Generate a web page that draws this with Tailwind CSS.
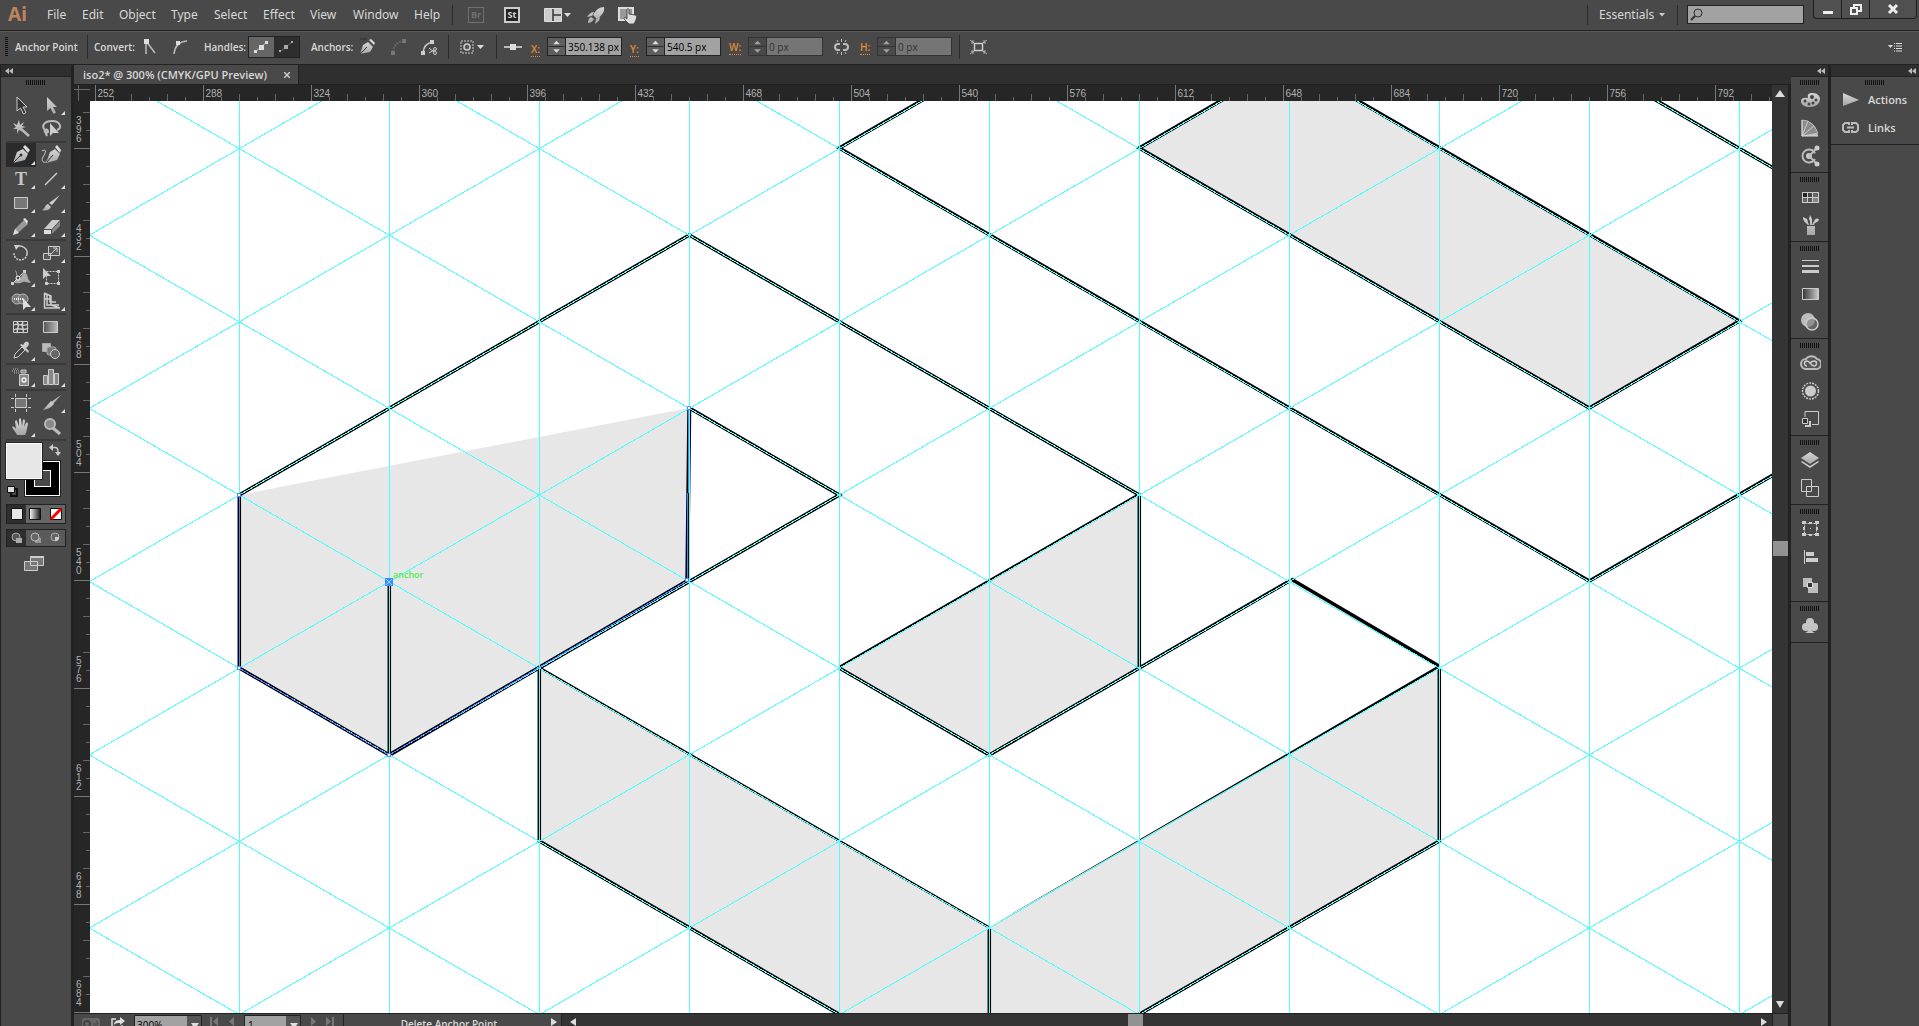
<!DOCTYPE html>
<html lang="en">
<head>
    <meta charset="UTF-8">
    <title>iso2* @ 300% (CMYK/GPU Preview)</title>
    <script src="https://cdn.jsdelivr.net/npm/@tailwindcss/browser@4"></script>
</head>
<body class="h-screen overflow-hidden flex flex-col bg-[#494949] text-[#d8d8d8] font-['Open_Sans','Noto_Sans',sans-serif] text-[11px] leading-4">
    <!-- shared pieces -->
    <svg class="absolute size-0">
        <defs>
            <pattern id="dots" width="2" height="5" patternUnits="userSpaceOnUse"><rect width="1" height="5" fill="#111"/></pattern>
            <linearGradient id="metal" x2="0" y2="1"><stop stop-color="#d6d6d6"/><stop offset="1" stop-color="#a6a6a6"/></linearGradient>
            <linearGradient id="ramp"><stop stop-color="#333"/><stop offset="1" stop-color="#ccc"/></linearGradient>
            <linearGradient id="rampTool"><stop stop-color="#555"/><stop offset="1" stop-color="#bbb"/></linearGradient>
            <linearGradient id="rampLight"><stop stop-color="#fff"/><stop offset="1" stop-color="#111"/></linearGradient>
        </defs>
        <symbol id="grip" viewBox="0 0 20 5"><rect width="20" height="5" fill="url(#dots)"/></symbol>
        <symbol id="collapse" viewBox="0 0 8 6"><path d="M4 0v6L0 3zM8 0v6L4 3z" fill="#bbb"/></symbol>
        <symbol id="corner" viewBox="0 0 30 24"><path d="M29 18v4h-4z" fill="#e0e0e0"/></symbol>
        <symbol id="steps" viewBox="0 0 17 18"><path d="M0 9h17" stroke="#2a2a2a"/><path d="M5 6.500h7L8.500 3zM5 12h7l-3.500 3.500z" fill="#ddd"/></symbol>
    </svg>

    <!-- menu bar -->
    <header class="h-[31px] shrink-0 flex items-center border-b border-[#222] text-xs">
        <div class="w-[47px] pl-2 pb-[2px] text-[19px] leading-6 font-bold text-[#c0845c] font-['Noto_Sans',sans-serif]">Ai</div>
        <nav class="grid grid-cols-[35px_37px_52px_43px_49px_47px_43px_61px_38px] font-['Noto_Sans',sans-serif]">
            <a href="#">File</a><a href="#">Edit</a><a href="#">Object</a><a href="#">Type</a><a href="#">Select</a><a href="#">Effect</a><a href="#">View</a><a href="#">Window</a><a href="#">Help</a>
        </nav>
        <div class="w-4 h-5 border-l border-[#2c2c2c]"></div>
        <button class="w-4 h-4 mb-px border border-[#707070] text-[#707070] text-[9px] leading-3 font-bold">Br</button>
        <button class="w-4 h-4 mb-px ml-5 border-2 border-[#ccc] bg-[#222] text-[9px] leading-3 font-bold">St</button>
        <button class="ml-6 mb-px" aria-label="Arrange documents"><svg width="27" height="16"><path d="M.5 1.500h17v13H.5z" fill="#ccc" stroke="#ddd"/><path d="M9 2v12M9 8h8" stroke="#333" stroke-width="1.500"/><path d="M20 6h7l-3.500 4z" fill="#ddd"/></svg></button>
        <button class="ml-4" aria-label="GPU performance"><svg width="18" height="18" fill="url(#metal)"><path d="M17 1C12 1 9 4 6 9l4 4c5-4 8-7 7-12zM7 6C4 6 2 8 0 11l5-1zM13 11c0 3-2 5-5 7l1-5zM4 11c-2 1-3 3-3 6 3 0 5-2 6-4z"/></svg></button>
        <button class="ml-[13px]" aria-label="Touch workspace"><svg width="20" height="18"><path d="M1 2h14v12H1z" fill="#999" stroke="#ddd" stroke-width="2"/><path d="M9 11V4c0-2 2-2 2 0v4l6 1c2 0 2 2 1 5l-2 4h-5l-5-5c0-2 1-2 3 0z" fill="#ddd" stroke="#333" stroke-width=".8"/></svg></button>
        <div class="flex-1"></div>
        <div class="h-5 w-3 border-l border-[#2c2c2c]"></div>
        <select class="appearance-none w-14 pb-px font-['Noto_Sans',sans-serif]" aria-label="Workspace"><option>Essentials</option></select>
        <svg class="ml-1 mr-3" width="6" height="4"><path d="M0 0h6L3 3.500z" fill="#ccc"/></svg>
        <div class="h-5 w-[10px] border-l border-[#2c2c2c]"></div>
        <label class="w-[117px] h-[19px] mb-[2px] flex items-center bg-[#a2a2a2] border border-[#222]">
            <svg class="ml-[2px]" width="13" height="13" fill="none" stroke="#333"><circle cx="8" cy="5" r="4"/><path d="M5 8l-4 4" stroke-width="2"/></svg>
            <input type="text" aria-label="Search" class="w-20 outline-none">
        </label>
        <div class="self-start ml-[9px] mr-[2px] h-[19px] flex border border-t-0 border-[#1f1f1f] rounded-b text-white divide-x divide-[#1f1f1f] bg-[#505050]">
            <button class="w-7" aria-label="Minimize"><svg width="27" height="18"><path d="M9 11h10v3H9z" fill="#eee"/></svg></button>
            <button class="w-7" aria-label="Restore"><svg width="27" height="18" fill="none" stroke="#eee" stroke-width="2"><path d="M12 9V5h7v6h-4M9 8h6v6H9z"/></svg></button>
            <button class="w-[46px]" aria-label="Close"><svg width="45" height="18" stroke="#eee" stroke-width="3"><path d="M19 5l8 8M27 5l-8 8"/></svg></button>
        </div>
    </header>

    <!-- control bar -->
    <section class="h-[34px] pb-[3px] shrink-0 flex items-center border-t border-t-[#5a5a5a] border-b border-b-[#222] text-[10px] font-semibold whitespace-nowrap">
        <svg class="ml-[5px] mr-[7px] shrink-0" width="3" height="20"><path d="M1.500 0v20" stroke="#111" stroke-width="3" stroke-dasharray="1 1"/></svg>
        <h1 class="w-[72px] shrink-0">Anchor Point</h1>
        <div class="w-[7px] h-6 border-l border-[#2c2c2c]"></div>
        <span class="w-[49px]">Convert:</span>
        <button class="w-[30px]" aria-label="Convert to corner"><svg width="16" height="18"><path d="M3 16V3l9 12" fill="none" stroke="#bbb" stroke-width="1.500"/><path d="M1 1h5v5H1z" fill="#ddd"/></svg></button>
        <button class="w-[31px]" aria-label="Convert to smooth"><svg width="16" height="18"><path d="M1 16Q2 4 14 3" fill="none" stroke="#bbb" stroke-width="1.500"/><path d="M3 3h4v4H3z" fill="#ddd"/></svg></button>
        <span class="w-[44px]">Handles:</span>
        <div class="flex border border-[#222] mr-[11px]">
            <button class="bg-[#666]" aria-label="Show handles"><svg width="25" height="20" fill="#ddd"><path d="M7 14L18 5" stroke="#bbb"/><path d="M5 13h3v3H5zM10 8h5v5h-5zM16 4h3v3h-3z"/></svg></button>
            <button class="bg-[#2e2e2e]" aria-label="Hide handles"><svg width="25" height="20" fill="#aaa"><path d="M7 14L18 5" stroke="#666"/><path d="M5 13h2v2H5zM10 8h4v4h-4zM17 4h2v2h-2z"/></svg></button>
        </div>
        <span class="w-12">Anchors:</span>
        <button class="w-[32px]" aria-label="Remove anchor"><svg width="18" height="18"><path d="M1 16L4 7l5-3 5 5-3 5z" fill="url(#metal)"/><path d="M10 2l5 5 1-2-4-4z" fill="#ddd"/><path d="M1 16l7-7M1 1h7" stroke="#333"/></svg></button>
        <button class="w-[30px]" aria-label="Connect anchors"><svg width="16" height="18"><path d="M2 14Q3 4 13 3" fill="none" stroke="#666" stroke-width="2" stroke-dasharray="2 1"/><path d="M0 13h4v4H0zM11 1h4v4h-4z" fill="#777"/></svg></button>
        <button class="w-[27px]" aria-label="Cut path"><svg width="18" height="18" fill="none" stroke="#ccc"><path d="M2 15Q3 5 12 4" stroke-width="1.500"/><path d="M0 13h4v4H0zM9 2h4v4H9z" fill="#ccc" stroke="none"/><circle cx="14" cy="11" r="1.500"/><circle cx="14" cy="15" r="1.500"/><path d="M8 10l5 4M8 15l5-3"/></svg></button>
        <div class="w-3 h-6 border-l border-[#2c2c2c]"></div>
        <button class="w-9" aria-label="Isolate"><svg width="25" height="16"><path d="M1 2h12v12H1z" fill="none" stroke="#ccc" stroke-dasharray="2 1"/><circle cx="7" cy="8" r="3" fill="#555" stroke="#ccc" stroke-width="1.500"/><path d="M17 6h7l-3.500 4z" fill="#ddd"/></svg></button>
        <div class="w-2 h-6 border-l border-[#2c2c2c]"></div>
        <svg class="w-[19px] h-4 mr-2 shrink-0"><path d="M0 8h18" stroke="#bbb" stroke-width="2"/><path d="M6 5h6v6H6z" fill="#ddd"/></svg>
        <label for="x" class="w-4 shrink-0 mt-1 text-[#e38a35]"><span class="border-b border-dotted">X:</span></label>
        <div class="mr-2 h-[19px] flex border border-[#222]"><svg class="bg-[#5e5e5e]" width="17" height="17"><use href="#steps"/></svg><input id="x" value="350.138 px" class="w-14 pl-[2px] bg-[#a2a2a2] text-black font-normal border-l border-[#222]"></div>
        <label for="y" class="w-4 shrink-0 mt-1 text-[#e38a35]"><span class="border-b border-dotted">Y:</span></label>
        <div class="mr-2 h-[19px] flex border border-[#222]"><svg class="bg-[#5e5e5e]" width="17" height="17"><use href="#steps"/></svg><input id="y" value="540.5 px" class="w-14 pl-[2px] bg-[#a2a2a2] text-black font-normal border-l border-[#222]"></div>
        <label for="w" class="w-[19px] shrink-0 text-[#e38a35]"><span class="border-b border-dotted">W:</span></label>
        <div class="mr-[11px] h-[19px] flex border border-[#333]"><svg class="opacity-60" width="17" height="17"><use href="#steps"/></svg><input id="w" value="0 px" class="w-14 pl-[2px] bg-[#757575] text-[#333] font-normal border-l border-[#333]"></div>
        <svg class="w-[26px] h-4 shrink-0" fill="none" stroke="#bbb" stroke-width="2"><path d="M6 5H4a3 3 0 0 0 0 6h2M9 5h2a3 3 0 0 1 0 6H9"/><path d="M7.500 0v3M7.500 13v3M3 1l1 2M12 1l-1 2M3 15l1-2M12 15l-1-2" stroke-width="1"/></svg>
        <label for="h" class="w-[17px] shrink-0 text-[#e38a35]"><span class="border-b border-dotted">H:</span></label>
        <div class="mr-[7px] h-[19px] flex border border-[#333]"><svg class="opacity-60" width="17" height="17"><use href="#steps"/></svg><input id="h" value="0 px" class="w-14 pl-[2px] bg-[#757575] text-[#333] font-normal border-l border-[#333]"></div>
        <div class="w-[11px] h-6 border-l border-[#2c2c2c]"></div>
        <button aria-label="Transform"><svg width="17" height="16" fill="none" stroke="#ccc"><path d="M4.500 4.500h8v7h-8z" stroke-width="1.500"/><path d="M0 1l4 3M17 1l-4 3M0 15l4-3M17 15l-4-3M1 4h2V1M16 4h-2V1M1 12h2v3M16 12h-2v3" stroke-width=".8"/></svg></button>
        <button class="ml-auto mr-4" aria-label="Panel menu"><svg width="15" height="10" fill="none" stroke="#ddd"><path d="M0 3h5L2.500 6z" fill="#ddd" stroke="none"/><path d="M6 1.500h1M8 1.500h6M6 4h1M8 4h6M6 6.500h1M8 6.500h6M6 9h1M8 9h6"/></svg></button>
    </section>

    <main class="flex-1 min-h-0 flex">
        <!-- tools -->
        <aside class="w-[74px] shrink-0 border-l border-r-3 border-[#222]">
            <div class="h-3 bg-[#2f2f2f] border-b border-[#222] pl-1 pt-[3px]"><svg width="8" height="6"><use href="#collapse"/></svg></div>
            <svg class="mt-[3px] ml-[25px] mb-2" width="20" height="5"><use href="#grip"/></svg>
            <div class="ml-[5px] w-15 flex flex-col [&_button]:block">
                <div class="grid grid-cols-2 border-b-2 border-[#3a3a3a]">
                    <button aria-label="Selection"><svg width="30" height="24"><path d="M11 4v14l3.500-3 3 6 2.500-1.500-3-5.500h4z" fill="#333" stroke="#ccc"/></svg></button>
                    <button aria-label="Direct selection"><svg width="30" height="24"><path d="M11 4v14l3.500-3 3 6 2.500-1.500-3-5.500h4z" fill="url(#metal)"/><use href="#corner"/></svg></button>
                    <button aria-label="Magic wand"><svg width="30" height="24"><path d="M14 11l9 8" stroke="#bbb" stroke-width="2.500"/><path d="M13 3l1 5 4-3-2 4 4 1-4 1 1 4-4-2-2 4v-5l-4 0 3-2-3-4 4 2z" fill="url(#metal)"/></svg></button>
                    <button aria-label="Lasso"><svg width="30" height="24"><path d="M9 13c-4-4-1-9 7-9s11 7 5 9M9 13c-2 3 4 4 3 1s-4-1-1 5" fill="none" stroke="#bbb" stroke-width="2"/><path d="M14 6v13l3-3h6z" fill="#ccc"/></svg></button>
                </div>
                <div class="grid grid-cols-2 border-b-2 border-[#3a3a3a]">
                    <button aria-label="Pen" class="bg-[#2b2b2b]"><svg width="30" height="24"><path d="M7 20l4-11 6-3 5 5-3 6z" fill="url(#metal)"/><path d="M17 4l2-2 5 5-2 3z" fill="#ddd"/><path d="M7 20l8-8" stroke="#333"/><circle cx="15" cy="12" r="1.500" fill="#333"/><use href="#corner"/></svg></button>
                    <button aria-label="Curvature"><svg width="30" height="24"><path d="M10 20l4-11 5-3 5 5-3 6z" fill="url(#metal)"/><path d="M19 4l2-2 4 5-1 3z" fill="#ddd"/><path d="M10 20l7-8" stroke="#333"/><path d="M6 8c6-3 3 3 1 6-2 4 0 6 4 5" fill="none" stroke="#ccc"/></svg></button>
                    <button aria-label="Type" class="relative text-[18px] leading-6 font-['Liberation_Serif',serif] font-bold text-[#c8c8c8]">T<svg class="absolute top-0 left-0" width="30" height="24"><use href="#corner"/></svg></button>
                    <button aria-label="Line"><svg width="30" height="24"><path d="M9 18L21 6" stroke="#ccc" stroke-width="1.500"/><use href="#corner"/></svg></button>
                    <button aria-label="Rectangle"><svg width="30" height="24"><path d="M8.500 6.500h13v11h-13z" fill="#777" stroke="#ccc"/><use href="#corner"/></svg></button>
                    <button aria-label="Paintbrush"><svg width="30" height="24"><path d="M24 4l-8 10-3-2z" fill="#ccc"/><path d="M12 13l3 3c-2 4-6 4-9 3 3-1 3-5 6-6z" fill="url(#metal)"/><use href="#corner"/></svg></button>
                    <button aria-label="Pencil"><svg width="30" height="24"><path d="M7 20l2-6 9-9 4 4-9 8z" fill="#999"/><path d="M7 20l2-6 4 4zM17 4l2-1 3 3-1 3z" fill="#ddd"/><use href="#corner"/></svg></button>
                    <button aria-label="Eraser"><svg width="30" height="24"><path d="M8 14l8-9h8l-8 9z" fill="#ccc"/><path d="M8 15h7v4H8z" fill="#ddd"/><path d="M16 15l8-9v5l-8 8z" fill="#888"/><use href="#corner"/></svg></button>
                </div>
                <div class="grid grid-cols-2 border-b-2 border-[#3a3a3a]">
                    <button aria-label="Rotate"><svg width="30" height="24"><path d="M10 6c6-3 12 2 11 7" fill="none" stroke="#ccc" stroke-width="1.500"/><path d="M21 13c-1 8-13 8-13-1" fill="none" stroke="#ccc" stroke-width="1.500" stroke-dasharray="2 1"/><path d="M8 4l6 0-4 5z" fill="#ccc"/><use href="#corner"/></svg></button>
                    <button aria-label="Scale"><svg width="30" height="24" fill="none" stroke="#ccc"><path d="M7.500 12.500h7v6h-7zM12.500 5.500h11v9h-11z" fill="#666" fill-opacity=".5"/><path d="M15 13l6-6M17 7h4v4"/><use href="#corner" stroke="none"/></svg></button>
                    <button aria-label="Width"><svg width="30" height="24"><path d="M9 5c3 1 1 6 4 8 3 1 2-5 6-5 4 1 1 6 6 9-2 2-5-1-8 0-4 2-6 1-9 1 3-4 3-8 1-13z" fill="#aaa"/><path d="M6 19l7-7 6-6" stroke="#ddd"/><circle cx="12" cy="13" r="2" fill="#444" stroke="#fff"/><path d="M5 17h3v3H5zM17 5h3v3h-3z" fill="#ccc"/><use href="#corner"/></svg></button>
                    <button aria-label="Free transform"><svg width="30" height="24"><path d="M10.500 6.500h12v12h-12z" fill="none" stroke="#ccc" stroke-dasharray="2 1"/><path d="M21 5h3v3h-3zM21 17h3v3h-3zM9 17h3v3H9zM7 3v11l3-3h5z" fill="#ccc"/></svg></button>
                    <button aria-label="Shape builder"><svg width="30" height="24"><circle cx="11" cy="10" r="5" fill="#777" stroke="#bbb"/><circle cx="17" cy="10" r="5" fill="#777" stroke="#bbb"/><path d="M8 10h10" stroke="#eee" stroke-width="2" stroke-dasharray="1 1"/><path d="M17 9v12l3-3h5z" fill="#ddd"/><use href="#corner"/></svg></button>
                    <button aria-label="Perspective grid"><svg width="30" height="24" fill="none" stroke="#ccc"><path d="M8.500 4v15H24M11 5v11h12M14 7v6h6M8 4l7 3v9l9 3M8 10h7" stroke-width="1.500"/><use href="#corner" stroke="none"/></svg></button>
                </div>
                <div class="grid grid-cols-2 border-b-2 border-[#3a3a3a]">
                    <button aria-label="Mesh"><svg width="30" height="24" fill="none" stroke="#ccc"><path d="M7.500 6.500h14v11h-14z" fill="#444"/><path d="M8 10c4-3 9 3 14-1M8 15c4-4 9 2 14-2M11 7c4 4-2 8 1 11M17 7c-3 4 2 7 0 11" stroke-width="1.500"/></svg></button>
                    <button aria-label="Gradient"><svg width="30" height="24"><path d="M7.500 6.500h14v11h-14z" fill="url(#rampTool)" stroke="#ccc"/></svg></button>
                    <button aria-label="Eyedropper"><svg width="30" height="24"><path d="M8 19l1-4 7-7 3 3-7 7z" fill="#444" stroke="#ccc"/><path d="M14 6l8 8 1-2-3-3c4-3 3-5 2-6s-3-1-5 3l-2-1z" fill="#ccc"/><use href="#corner"/></svg></button>
                    <button aria-label="Blend"><svg width="30" height="24" stroke="#aaa"><path d="M6.500 4.500h8v8h-8z" fill="#bbb"/><rect x="11" y="8" width="9" height="8" rx="2" fill="#777"/><circle cx="19" cy="15" r="4.500" fill="#666" stroke="#ccc"/></svg></button>
                </div>
                <div class="grid grid-cols-2 border-b-2 border-[#3a3a3a]">
                    <button aria-label="Symbol sprayer"><svg width="30" height="24"><path d="M7 4h6M6 6h7M8 8h5" stroke="#bbb" stroke-dasharray="1 1"/><path d="M13.500 9.500h9v11h-9zM15 5h5v3h-5z" fill="#888" stroke="#ccc"/><circle cx="18" cy="15" r="2" fill="none" stroke="#eee" stroke-width="1.500"/><use href="#corner"/></svg></button>
                    <button aria-label="Column graph"><svg width="30" height="24" fill="#888" stroke="#ccc"><path d="M7.500 10.500h4v9h-4zM12.500 4.500h5v15h-5zM18.500 8.500h4v11h-4z"/><use href="#corner" stroke="none"/></svg></button>
                </div>
                <div class="grid grid-cols-2 border-b-2 border-[#3a3a3a]">
                    <button aria-label="Artboard"><svg width="30" height="24" stroke="#ccc"><path d="M9.500 7.500h11v9h-11z" fill="#777"/><path d="M9.500 3v3M20.500 3v3M9.500 18v3M20.500 18v3M5 7.500h3M22 7.500h3M5 16.500h3M22 16.500h3"/></svg></button>
                    <button aria-label="Slice"><svg width="30" height="24"><path d="M25 4l-8 9-2-2z" fill="#bbb"/><path d="M7 19l8-9 3 3c-3 4-7 5-11 6z" fill="url(#metal)"/><use href="#corner"/></svg></button>
                    <button aria-label="Hand"><svg width="30" height="24"><path d="M11 20c-1-3-3-4-5-8 1-1 3 0 4 2L9 6c1-1 2-1 2 0l2 5V4c1-1 2-1 2 0l1 7 1-6c1-1 2 0 2 1l-1 6 2-4c1-1 2 0 2 1-1 4-1 7-3 11z" fill="url(#metal)"/><use href="#corner"/></svg></button>
                    <button aria-label="Zoom"><svg width="30" height="24"><path d="M17 13l7 6" stroke="#bbb" stroke-width="3"/><circle cx="14" cy="9" r="5" fill="#888" stroke="#bbb" stroke-width="2"/></svg></button>
                </div>
                <!-- fill and stroke swatches -->
                <div class="relative h-[61px]">
                    <div class="absolute left-[19px] top-5 size-[35px] bg-black border border-white outline outline-[#222]"><div class="m-2 size-[17px] border border-white bg-[#494949]"></div></div>
                    <button class="absolute left-0 top-[2px] size-9 bg-[#e6e6e6] border border-white outline outline-[#222]" aria-label="Fill"></button>
                    <button class="absolute left-[43px] top-[3px]" aria-label="Swap"><svg width="12" height="12" fill="none" stroke="#ccc"><path d="M2 3.500h4q3 0 3 4v2" stroke-width="1.500"/><path d="M4 0v7L0 3.500zM6 8h6l-3 4z" fill="#ccc" stroke="none"/></svg></button>
                    <button class="absolute left-0 top-11" aria-label="Default"><svg width="13" height="12"><path d="M5 4h6v7H5z" fill="none" stroke="#111" stroke-width="2"/><path d="M1.500 1.500h7v6h-7z" fill="#ddd" stroke="#111"/></svg></button>
                </div>
                <div class="mt-[2px] h-5 grid grid-cols-3 bg-[#666] border border-[#222]">
                    <button class="bg-[#2e2e2e]" aria-label="Color"><svg width="19" height="18"><path d="M4.500 3.500h11v11h-11z" fill="#e6e6e6" stroke="#111"/></svg></button>
                    <button aria-label="Gradient"><svg width="18" height="18"><path d="M3.500 3.500h11v11h-11z" fill="url(#rampLight)" stroke="#111"/></svg></button>
                    <button aria-label="None"><svg width="19" height="18"><path d="M4.500 3.500h11v11h-11z" fill="#fff" stroke="#111"/><path d="M5 14L15 4" stroke="#f00" stroke-width="3"/></svg></button>
                </div>
                <div class="mt-[5px] h-[18px] grid grid-cols-3 bg-[#5a5a5a] border border-[#222]">
                    <button class="bg-[#2e2e2e]" aria-label="Draw normal"><svg width="18" height="16"><circle cx="9" cy="7" r="4" fill="#555" stroke="#aaa"/><path d="M9 8h6v5H9z" fill="#aaa"/></svg></button>
                    <button aria-label="Draw behind"><svg width="18" height="16"><path d="M9 8h6v5H9z" fill="#999"/><circle cx="9" cy="7" r="4" fill="#666" stroke="#bbb"/></svg></button>
                    <button aria-label="Draw inside"><svg width="18" height="16"><circle cx="9" cy="7" r="4" fill="#666" stroke="#aaa"/><path d="M9 7h4q0 4-4 4z" fill="#ccc"/></svg></button>
                </div>
                <button class="mt-2 ml-[17px]" aria-label="Screen mode"><svg width="22" height="17" fill="#777" stroke="#ccc"><path d="M1.500 6.500h13v9h-13zM7.500 1.500h13v9h-13z"/><path d="M7 2h14" stroke-width="2"/></svg></button>
            </div>
        </aside>

        <!-- document window -->
        <section class="flex-1 min-w-0 flex flex-col bg-[#2f2f2f]">
            <div class="h-5 shrink-0 flex border-b border-[#1f1f1f]">
                <div class="w-[225px] flex items-center justify-between pl-[9px] pr-2 bg-[#494949] border-r border-[#222] font-semibold text-[11px] whitespace-nowrap">
                    <h2>iso2* @ 300% (CMYK/GPU Preview)</h2>
                    <button aria-label="Close document"><svg width="6" height="6" stroke="#ccc" stroke-width="1.500"><path d="M0 0l6 6M6 0L0 6"/></svg></button>
                </div>
            </div>
            <div class="flex-1 min-h-0 grid grid-cols-[16px_minmax(0,1fr)_19px] grid-rows-[16px_minmax(0,1fr)]">
                <svg class="size-full bg-[#262626]" stroke="#666"><path d="M4.500 0v16M0 4.500h16"/></svg>
                <svg id="rulerX" class="size-full bg-[#262626] font-['Liberation_Sans',sans-serif] text-[10px]" fill="#b0b0b0"></svg>
                <div class="bg-[#343434] border-r-3 border-[#222] flex justify-center items-center"><svg width="10" height="7"><path d="M0 7h10L5 0z" fill="#ddd"/></svg></div>
                <svg id="rulerY" class="size-full bg-[#262626] font-['Liberation_Sans',sans-serif] text-[10px]" fill="#b0b0b0"></svg>

                <svg class="size-full bg-white">
                    <g transform="translate(-90 -101)">
                        <!-- fills -->
                        <path fill="#e7e7e7" d="M239 495L689 408 687 581 539 668 389 755 239 668zM839 668l300-173v173l-150 87zM539 668l450 260v173L539 841zM989 928l450-260v173L989 1101zM1139 148l150-87 450 260-150 87z"/>
                        <!-- outlines -->
                        <g fill="none" stroke="#000" stroke-width="3.500" transform="translate(.3 0)">
                            <path d="M239 495L689 235l450 260v173l-150 87-150-87M1139 668l150-87M239 495v173l150 87M389 581v174M689 408l150 87-300 173v173l450 260M989 928v173M1439 668v173l-450 260M1139 -25L839 148l750 433 300-173M1289 61l-150 87 450 260 150-87-450-260M1439 -25l450 260"/>
                            <path d="M389 755l298-174 2-173" stroke-width="4"/>
                            <path d="M539 667.500l450 260M839 667l300-173" stroke-width="2.500"/>
                        </g>
                        <path d="M989 927L1439 665v3z"/>
                        <path d="M1291 579l148 87" stroke="#000" stroke-width="3.500"/>
                        <!-- isometric grid -->
                        <path id="grid" fill="none" stroke="#4fffff" shape-rendering="crispEdges"/>
                        <!-- selected path -->
                        <path d="M239 495v173l150 87 298-174 2-173" fill="none" stroke="#4f80ff" shape-rendering="crispEdges"/>
                        <path d="M385 578h8v8h-8z" fill="#4f80ff"/>
                        <path d="M386 579l6 6M392 579l-6 6" stroke="#4fffff"/>
                        <path d="M237.500 493.500h3v3h-3zM237.500 666.500h3v3h-3zM387.500 753.500h3v3h-3zM685.500 578.500h3v3h-3zM687.500 406.500h3v3h-3z" fill="#fff" stroke="#4f80ff"/>
                        <text x="393" y="578" fill="#4fee4f" class="text-[9px] font-semibold">anchor</text>
                    </g>
                </svg>
                <div class="bg-[#343434] border-r-3 border-[#222] flex flex-col items-center justify-end">
                    <div class="basis-[48%] shrink-0"></div>
                    <div class="mt-[2px] w-[15px] h-[15px] bg-[#929292] shrink-0"></div>
                    <div class="flex-1"></div>
                    <svg class="mb-[5px]" width="8" height="7"><path d="M0 0h8L4 7z" fill="#ddd"/></svg>
                </div>
            </div>
            <!-- status bar -->
            <footer class="h-[13px] shrink-0 flex items-start overflow-hidden bg-[#494949] border-t border-[#222] text-[10px]">
                <svg class="ml-2 mr-[11px] mt-1 shrink-0" width="18" height="14"><rect width="18" height="14" rx="2" fill="#666"/><circle cx="5" cy="6" r="3" fill="none" stroke="#444" stroke-width="2"/><path d="M11 6h5l-2-3M16 8h-5l2 3" stroke="#444" fill="none"/></svg>
                <button class="mr-[9px] mt-[2px]" aria-label="Share"><svg width="14" height="14"><path d="M5 3H1v9h10V9" fill="none" stroke="#ddd" stroke-width="1.500"/><path d="M3 9c0-4 3-5 6-5V1l5 4-5 4V7C6 7 5 7 3 9z" fill="#ddd"/></svg></button>
                <div class="mt-px h-5 flex border border-[#222]"><input aria-label="Zoom" value="300%" class="w-[52px] h-[18px] pl-[2px] bg-[#a2a2a2] text-black"><button class="w-[14px] bg-[#555]" aria-label="Zoom levels"><svg width="14" height="16"><path d="M4 6h8l-4 6z" fill="#ddd"/></svg></button></div>
                <svg class="mx-2 mt-[3px] shrink-0" width="26" height="10" fill="#777"><path d="M0 0h2v9H0zM8 0v9L3 4.500zM24 0v9l-5-4.500z"/></svg>
                <div class="mt-px h-5 flex border border-[#222]"><input aria-label="Artboard" value="1" class="w-[41px] h-[18px] pl-[3px] bg-[#a2a2a2] text-black"><button class="w-[14px] bg-[#555]" aria-label="Artboards"><svg width="14" height="16"><path d="M4 6h8l-4 6z" fill="#ddd"/></svg></button></div>
                <svg class="mx-2 mt-[3px] shrink-0" width="26" height="10" fill="#777"><path d="M2 0v9l5-4.500zM17 0v9l5-4.500zM23 0h2v9h-2z"/></svg>
                <div class="w-[199px] pt-[2px] pl-3 h-5 border-l border-[#222] text-center font-semibold">Delete Anchor Point</div>
                <div class="w-5 shrink-0 pl-[9px] pt-1 h-5 border-r border-[#222]"><svg width="6" height="8"><path d="M0 0v8l6-4z" fill="#ddd"/></svg></div>
                <div class="flex-1 h-5 pt-1 pl-2 pr-1 flex items-start bg-[#343434]">
                    <svg width="7" height="8"><path d="M6 0v8L0 4z" fill="#ddd"/></svg>
                    <div class="basis-[46%] shrink-0"></div>
                    <div class="w-[15px] h-4 -mt-1 bg-[#929292]"></div>
                    <svg class="ml-auto" width="7" height="8"><path d="M0 0v8l6-4z" fill="#ddd"/></svg>
                </div>
                <div class="w-[19px] h-5 border-x border-r-3 border-[#222]"></div>
            </footer>
        </section>

        <!-- collapsed panels -->
        <aside class="w-10 shrink-0 border-r-3 border-[#222] [&_button]:block [&_button]:h-7 [&_button]:w-full [&_button]:pl-[9px]">
            <div class="h-3 bg-[#2f2f2f] border-b border-[#222] pl-[26px] pt-[3px]"><svg width="8" height="6"><use href="#collapse"/></svg></div>
            <div class="pb-[2px] border-b border-[#222]">
                <svg class="mt-[3px] ml-[9px] mb-px" width="20" height="5"><use href="#grip"/></svg>
                <button aria-label="Color"><svg width="20" height="20"><path d="M1 11c0-3 3-4 7-3C7 3 10 3 13 3c4 0 7 3 7 6 0 5-5 8-10 8S1 15 1 11z" fill="url(#metal)"/><g fill="#444"><circle cx="5" cy="11" r="1.500"/><circle cx="9" cy="14" r="1.500"/><circle cx="13" cy="13" r="1.500"/><circle cx="16" cy="10" r="1.500"/><circle cx="12" cy="7" r="2"/></g></svg></button>
                <button aria-label="Color guide"><svg width="20" height="20"><path d="M2 2c9 0 16 7 16 16H2z" fill="#bbb"/><path d="M2 18V2l6 1zM2 18L8 3l6 5zM2 18L14 8l4 7z" fill="#444" fill-opacity=".4" stroke="#ccc" stroke-width=".6"/><path d="M2 2v16h16" fill="none" stroke="#ddd"/></svg></button>
                <button aria-label="Color themes"><svg width="20" height="22"><circle cx="9" cy="11" r="6.500" fill="none" stroke="#bbb" stroke-width="2" stroke-dasharray="34 7" stroke-dashoffset="-3"/><circle cx="9" cy="11" r="3" fill="#ccc"/><path d="M9 11l8-8M9 11l8 8" stroke="#bbb" stroke-width="2"/><circle cx="17" cy="3" r="2.500" fill="#ccc"/><circle cx="17" cy="19" r="2.500" fill="#ccc"/></svg></button>
            </div>
            <div class="pb-[2px] border-b border-[#222]">
                <svg class="mt-1 ml-[9px] mb-px" width="20" height="5"><use href="#grip"/></svg>
                <button aria-label="Swatches"><svg width="20" height="20"><path d="M2 5h17v11H2z" fill="#ccc"/><path d="M3 6h4v4H3z" fill="#222"/><path d="M8 6h4v4H8z" fill="#444"/><path d="M13 6h5v4h-5zM3 11h4v4H3z" fill="#666"/><path d="M8 11h4v4H8z" fill="#555"/><path d="M13 11h5v4h-5z" fill="#888"/></svg></button>
                <button aria-label="Brushes"><svg width="20" height="22" fill="url(#metal)"><path d="M7 12h8v9H7zM9 11L7 5l-4-2c0 4 2 5 5 8zM10 11V7L9 5l1-4 2 4v6zM12 11l2-4c2-3 4-3 5-1-1 2-3 2-4 3l-1 2z"/></svg></button>
            </div>
            <div class="pb-[2px] border-b border-[#222]">
                <svg class="mt-1 ml-[9px] mb-px" width="20" height="5"><use href="#grip"/></svg>
                <button aria-label="Stroke"><svg width="20" height="20" fill="#ccc"><path d="M2 4h17v1H2zM2 9h17v2H2zM2 14h17v3H2z"/></svg></button>
                <button aria-label="Gradient"><svg width="20" height="20"><path d="M2.500 4.500h16v11h-16z" fill="url(#ramp)" stroke="#ccc"/></svg></button>
                <button aria-label="Transparency"><svg width="20" height="20"><circle cx="8" cy="8" r="7" fill="#bbb"/><circle cx="12" cy="12" r="6" fill="#777" fill-opacity=".6" stroke="#ccc" stroke-width="1.500"/></svg></button>
            </div>
            <div class="pb-[2px] border-b border-[#222]">
                <svg class="mt-1 ml-[9px] mb-px" width="20" height="5"><use href="#grip"/></svg>
                <button aria-label="Libraries"><svg width="21" height="20" fill="none"><path d="M6 16a5 5 0 0 1 0-10 7 7 0 0 1 11 0 5 5 0 0 1-2 10z" fill="#555" stroke="#bbb" stroke-width="2"/><path d="M7 13a2.500 2.500 0 0 1 0-5c3 0 4 5 7 5a2.500 2.500 0 0 0 0-5c-2 0-3 1-4 2" stroke="#ccc" stroke-width="1.500"/></svg></button>
                <button aria-label="Appearance"><svg width="21" height="20"><circle cx="10.500" cy="10" r="5.500" fill="#ccc"/><circle cx="10.500" cy="10" r="8" fill="none" stroke="#ccc" stroke-width="1.500" stroke-dasharray="2 1"/></svg></button>
                <button aria-label="Graphic styles"><svg width="20" height="20" fill="none" stroke="#ccc"><path d="M5 8V2.500h13.500v13H12"/><path d="M2.500 9.500h5v5h-5z" fill="#333"/><path d="M10 12v5H5" stroke-width="2"/></svg></button>
            </div>
            <div class="pb-[2px] border-b border-[#222]">
                <svg class="mt-1 ml-[9px] mb-px" width="20" height="5"><use href="#grip"/></svg>
                <button aria-label="Layers"><svg width="20" height="20"><path d="M10 2l9 6-9 6-9-6z" fill="url(#metal)"/><path d="M2 11l8 5 8-5 1 1-9 6-9-6z" fill="#ccc"/></svg></button>
                <button aria-label="Artboards"><svg width="20" height="20" fill="#494949" stroke="#ccc"><path d="M1.500 1.500h10v12h-10zM6.500 8.500h12v10h-12z"/></svg></button>
            </div>
            <div class="pb-[2px] border-b border-[#222]">
                <svg class="mt-1 ml-[9px] mb-px" width="20" height="5"><use href="#grip"/></svg>
                <button aria-label="Transform"><svg width="20" height="20"><path d="M4.500 4.500h12v11h-12z" fill="none" stroke="#ccc" stroke-dasharray="2 1"/><path d="M2 2h4v3H2zM15 2h4v3h-4zM2 14h4v3H2zM15 14h4v3h-4zM9 3h3v2H9zM9 15h3v2H9zM3 8h2v3H3zM16 8h2v3h-2zM10 9h1v1h-1z" fill="#ccc"/></svg></button>
                <button aria-label="Align"><svg width="20" height="20" fill="#ccc"><path d="M4 3h1v14H4zM6 5h8v4H6zM6 11h12v4H6z"/></svg></button>
                <button aria-label="Pathfinder"><svg width="20" height="20"><path d="M3 3h9v9H3zM8 8h10v10H8z" fill="#bbb"/><path d="M7.500 7.500h5v5h-5z" fill="#333" stroke="#ddd"/></svg></button>
            </div>
            <div class="pb-[2px] border-b border-[#222]">
                <svg class="mt-1 ml-[9px] mb-px" width="20" height="5"><use href="#grip"/></svg>
                <button aria-label="Symbols"><svg width="20" height="20" fill="#c4c4c4"><circle cx="10" cy="6" r="4"/><circle cx="6" cy="11" r="4"/><circle cx="14" cy="11" r="4"/><path d="M9 9h2c0 5 1 7 4 8H5c3-1 4-3 4-8z"/></svg></button>
            </div>
        </aside>

        <aside class="w-[88px] shrink-0 text-[11px] font-semibold">
            <div class="h-3 bg-[#2f2f2f] border-b border-[#222] pl-[77px] pt-[3px]"><svg width="8" height="6"><use href="#collapse"/></svg></div>
            <div class="pb-[2px] border-b border-[#222]">
                <svg class="mt-[3px] ml-[34px] mb-px" width="20" height="5"><use href="#grip"/></svg>
                <button class="h-7 flex items-center pl-3 gap-2"><svg width="17" height="14"><path d="M0 0v13l16-6z" fill="url(#metal)"/></svg>Actions</button>
                <button class="h-7 flex items-center pl-[11px] gap-[9px]"><svg width="17" height="12" fill="none" stroke="#bbb" stroke-width="2"><path d="M7 3V1H3L1 3v5l2 2h4V8M10 3V1h4l2 2v5l-2 2h-4V8M5 5.500h7"/></svg>Links</button>
            </div>
        </aside>
    </main>

    <script>
    // guides: verticals plus both diagonal families
    let d = '';
    for (let x = 239.5; x < 4000; x += 150) d += `M${x} 0V3000`;
    for (let y = -2536; y < 5000; y += 173.2) {
        d += `M89.3 ${y}l3600 2078.4M89.3 ${y}l3600 -2078.4`;
    }
    document.getElementById('grid').setAttribute('d', d);

    // rulers: one label every 36 units, a tick every 6
    const rulerX = document.getElementById('rulerX');
    const rulerY = document.getElementById('rulerY');
    const w = rulerX.getBoundingClientRect().width;
    const ht = rulerY.getBoundingClientRect().height;
    let h = '', v = '';
    for (let i = 0, x = 5.5; x < w; i++, x += 108) {
        h += `<path d="M${x} 0v16" stroke="#777"/>`;
        if (x + 20 < w) h += `<text x="${x + 2}" y="12">${252 + i * 36}</text>`;
        for (let k = 1; k < 6; k++) {
            h += `<path d="M${x + k * 18} 16v-${k % 2 ? 4 : 7}" stroke="#666"/>`;
        }
    }
    for (let i = 0, y = 47.5; y < ht + 108; i++, y += 108) {
        v += `<path d="M0 ${y}h16" stroke="#777"/>`;
        if (y < ht) String(396 + i * 36).split('').forEach((c, n) => {
            v += `<text x="2" y="${y - 25 + n * 9}">${c}</text>`;
        });
        for (let k = 1; k < 6; k++) {
            v += `<path d="M16 ${y - 108 + k * 18}h-${k % 2 ? 4 : 7}" stroke="#666"/>`;
        }
    }
    rulerX.innerHTML = h;
    rulerY.innerHTML = v;
    </script>
</body>
</html>
